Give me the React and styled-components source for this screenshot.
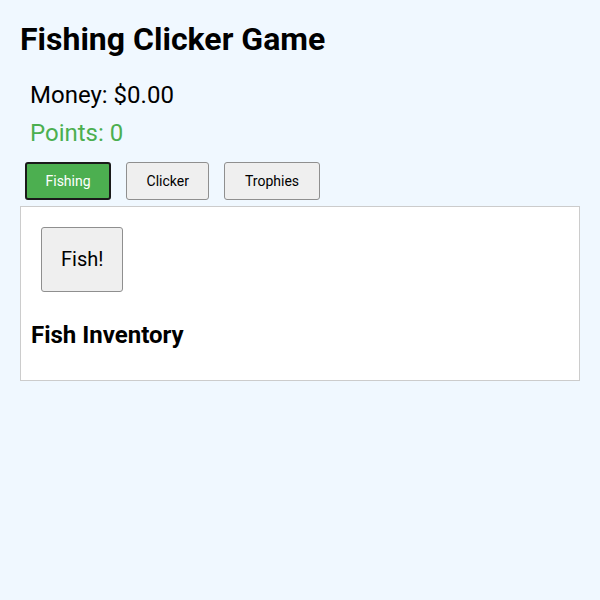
import React, { useState } from 'react';
import styled, { createGlobalStyle } from 'styled-components';

const GlobalStyle = createGlobalStyle`
  body {
    margin: 0;
    background: #f0f8ff;
    font-family: Roboto, "Liberation Sans", sans-serif;
    color: #000;
  }
`;

const tabs = ['Fishing', 'Clicker', 'Trophies'];

const App = () => {
  const [active, setActive] = useState('Fishing');
  return (
    <>
      <GlobalStyle />
      <Page>
        <Title>Fishing Clicker Game</Title>
        <Stats>
          <Stat>Money: $0.00</Stat>
          <Stat green>Points: 0</Stat>
        </Stats>
        <TabBar>
          {tabs.map((t) => (
            <TabButton key={t} active={t === active} onClick={() => setActive(t)}>
              {t}
            </TabButton>
          ))}
        </TabBar>
        <Panel>
          <FishButton>Fish!</FishButton>
          <SectionTitle>Fish Inventory</SectionTitle>
        </Panel>
      </Page>
    </>
  );
};

const Page = styled.div`
  padding: 20px;
  display: flex;
  flex-direction: column;
`;

const Title = styled.h1`
  font-size: 32px;
  font-weight: 700;
  margin: 1px 0 0;
  line-height: 37px;
`;

const Stats = styled.div`
  display: flex;
  flex-direction: column;
  gap: 10px;
  padding: 23px 10px 0;
`;

const Stat = styled.div`
  font-size: 24px;
  line-height: 28px;
  color: ${({ green }) => (green ? '#4caf50' : '#000')};
`;

const TabBar = styled.div`
  display: flex;
  gap: 15px;
  padding: 15px 5px 0;
  margin-bottom: 6px;
`;

const TabButton = styled.button.withConfig({
  shouldForwardProp: (p) => p !== 'active',
})`
  font-family: Roboto, "Liberation Sans", sans-serif;
  font-size: 14px;
  line-height: 16px;
  padding: ${({ active }) => (active ? '9px 18.5px' : '10px 19.5px')};
  border-radius: 3px;
  cursor: pointer;
  background: ${({ active }) => (active ? '#4caf50' : '#efefef')};
  color: ${({ active }) => (active ? '#fff' : '#000')};
  border: ${({ active }) => (active ? '2px solid #1a1a1a' : '1px solid #8f8f8f')};
`;

const Panel = styled.div`
  background: #fff;
  border: 1px solid #ccc;
  padding: 10px 10px 11px;
`;

const FishButton = styled.button`
  display: block;
  margin: 10px;
  font-family: Roboto, "Liberation Sans", sans-serif;
  font-size: 20px;
  line-height: 23px;
  padding: 20px 19px;
  background: #efefef;
  border: 1px solid #8f8f8f;
  border-radius: 3px;
  cursor: pointer;
`;

const SectionTitle = styled.h2`
  font-size: 24px;
  font-weight: 700;
  line-height: 28px;
  margin: 29px 0 20px;
`;

export default App;
